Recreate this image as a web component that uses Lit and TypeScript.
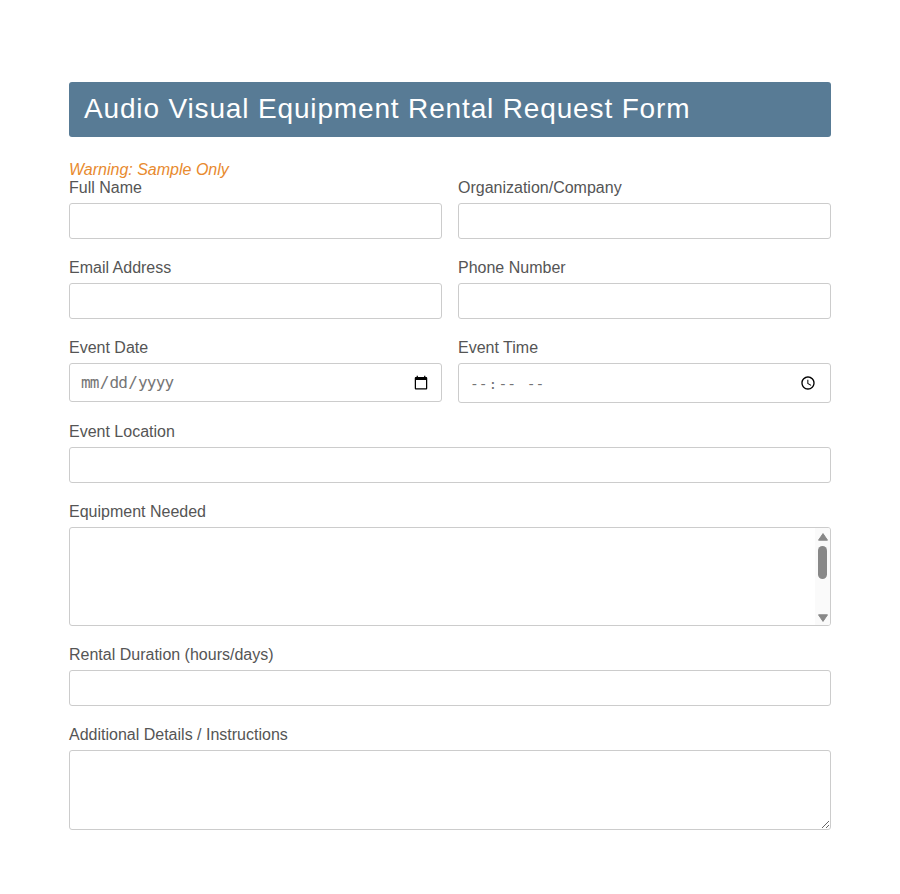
import { LitElement, html, css } from "lit";
import { customElement } from "lit/decorators.js";

@customElement("app-root")
export class AppRoot extends LitElement {
  static styles = css`
    :host {
      display: block;
      font-family: "Liberation Sans", Arial, sans-serif;
      color: #555;
      font-size: 16px;
    }

    .page {
      box-sizing: border-box;
      width: 900px;
      height: 894px;
      padding: 82px 69px 0;
    }

    h1 {
      margin: 0 0 24px;
      padding: 10px 15px;
      height: 55px;
      box-sizing: border-box;
      background: #587b95;
      color: #fff;
      font-size: 28px;
      font-weight: 400;
      letter-spacing: 0.85px;
      line-height: 33px;
      border-radius: 3px;
    }

    .warning {
      color: #e88a2e;
      font-style: italic;
      line-height: 18px;
    }

    .row {
      display: grid;
      grid-template-columns: 1fr 1fr;
      gap: 16px;
    }

    .field {
      display: block;
      margin-bottom: 20px;
    }

    label {
      display: block;
      line-height: 18px;
      margin-bottom: 6px;
    }

    input,
    textarea {
      display: block;
      box-sizing: border-box;
      width: 100%;
      margin: 0;
      padding: 8px 10px;
      height: 36px;
      border: 1px solid #ccc;
      border-radius: 3px;
      background: #fff;
      font-size: 16px;
    }

    input.date {
      height: 39px;
    }

    input.time {
      height: 40px;
    }

    input.date::-webkit-datetime-edit {
      color: #757575;
      letter-spacing: -0.8px;
    }

    input.time::-webkit-datetime-edit {
      color: #757575;
      font-size: 14.6px;
    }

    textarea {
      font-family: "Liberation Mono", monospace;
    }

    .scroll-box {
      position: relative;
    }

    .equipment {
      height: 99px;
      overflow: hidden;
      resize: none;
    }

    /* the sandbox browser hides native scrollbars, so this one is drawn */
    .scrollbar {
      position: absolute;
      top: 1px;
      right: 1px;
      bottom: 1px;
      width: 15px;
      box-sizing: border-box;
      padding: 5px 0 3px;
      display: flex;
      flex-direction: column;
      align-items: center;
      background: #fafafa;
      border-radius: 0 2px 2px 0;
    }

    .scrollbar svg {
      display: block;
      fill: #888;
      stroke: #888;
      stroke-width: 1;
      stroke-linejoin: round;
    }

    .thumb {
      width: 9px;
      height: 33px;
      margin-top: 5px;
      margin-bottom: auto;
      background: #888;
      border-radius: 5px;
    }

    .details {
      height: 80px;
    }
  `;

  render() {
    return html`
      <div class="page">
        <h1>Audio Visual Equipment Rental Request Form</h1>
        <div class="warning">Warning: Sample Only</div>
        <div class="row">
          <div class="field"><label>Full Name</label><input type="text" /></div>
          <div class="field"><label>Organization/Company</label><input type="text" /></div>
        </div>
        <div class="row">
          <div class="field"><label>Email Address</label><input type="email" /></div>
          <div class="field"><label>Phone Number</label><input type="tel" /></div>
        </div>
        <div class="row">
          <div class="field"><label>Event Date</label><input class="date" type="date" /></div>
          <div class="field"><label>Event Time</label><input class="time" type="time" /></div>
        </div>
        <div class="field"><label>Event Location</label><input type="text" /></div>
        <div class="field">
          <label>Equipment Needed</label>
          <div class="scroll-box">
            <textarea class="equipment"></textarea>
            <div class="scrollbar">
              <svg width="10" height="8" viewBox="0 0 10 8"><polygon points="5,0.6 9.5,7.2 0.5,7.2" /></svg>
              <div class="thumb"></div>
              <svg width="10" height="8" viewBox="0 0 10 8"><polygon points="0.5,0.8 9.5,0.8 5,7.4" /></svg>
            </div>
          </div>
        </div>
        <div class="field"><label>Rental Duration (hours/days)</label><input type="text" /></div>
        <div class="field"><label>Additional Details / Instructions</label><textarea class="details"></textarea></div>
      </div>
    `;
  }
}
